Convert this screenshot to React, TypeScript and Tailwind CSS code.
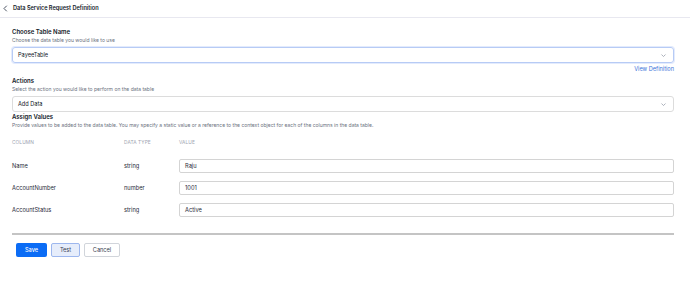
import React from "react";

const Chevron = () => (
  <svg width="7" height="7" viewBox="0 0 10 10" fill="none" stroke="#9ca3af" strokeWidth="1.2" strokeLinecap="round" strokeLinejoin="round">
    <path d="M2.5 4l2.5 2.5L7.5 4" />
  </svg>
);

const rows = [
  { name: "Name", type: "string", value: "Raju" },
  { name: "AccountNumber", type: "number", value: "1001" },
  { name: "AccountStatus", type: "string", value: "Active" },
];

export default function App() {
  return (
    <div className="w-[690px] h-[281px] bg-white text-[#1f2937]" style={{ fontFamily: "Inter, 'Noto Sans', sans-serif" }}>
      <div className="h-[18px] border-b border-[#e8e8f0] flex items-center">
        <svg className="ml-[3px]" width="5" height="7" viewBox="0 0 5 7" fill="none" stroke="#374151" strokeWidth="0.9" strokeLinecap="round" strokeLinejoin="round">
          <path d="M3.5 1L1 3.5 3.5 6" />
        </svg>
        <span className="ml-[5px] text-[5.6px] font-semibold text-[#111827]">Data Service Request Definition</span>
      </div>
      <div className="pl-[12px] pr-[16px]">
        <div className="pt-[9px] text-[6px] font-semibold leading-[9px] text-[#111827]">Choose Table Name</div>
        <div className="text-[5px] leading-[8px] text-[#6b7280]">Choose the data table you would like to use</div>
        <div className="mt-[3px] h-[16px] rounded-[3px] border border-[#b7cbf5] shadow-[0_0_0_1px_#e3ebfd] flex items-center justify-between pl-[5px] pr-[6px]">
          <span className="text-[5.6px] text-[#111827]">PayeeTable</span>
          <Chevron />
        </div>
        <div className="flex justify-end mt-[2px]">
          <span className="text-[5.6px] leading-[9px] text-[#3b74d9]">View Definition</span>
        </div>
        <div className="mt-[2px] text-[6px] font-semibold leading-[9px] text-[#111827]">Actions</div>
        <div className="text-[5px] leading-[8px] text-[#6b7280]">Select the action you would like to perform on the data table</div>
        <div className="mt-[3px] h-[16px] rounded-[3px] border border-[#dcdcdc] flex items-center justify-between pl-[5px] pr-[6px]">
          <span className="text-[5.6px] text-[#111827]">Add Data</span>
          <Chevron />
        </div>
        <div className="text-[6px] font-semibold leading-[9px] text-[#111827]">Assign Values</div>
        <div className="text-[5px] leading-[8px] text-[#6b7280]">Provide values to be added to the data table. You may specify a static value or a reference to the context object for each of the columns in the data table.</div>
        <div className="mt-[10px] flex items-center h-[8px] text-[4.8px] text-[#9ca3af] tracking-[0.1px]">
          <div className="w-[112px]">COLUMN</div>
          <div className="w-[55px]">DATA TYPE</div>
          <div>VALUE</div>
        </div>
        <div className="mt-[12px] flex flex-col gap-[8px]">
          {rows.map((r) => (
            <div key={r.name} className="flex items-center h-[14px] text-[5.7px] text-[#1f2937]">
              <div className="w-[112px]">{r.name}</div>
              <div className="w-[55px]">{r.type}</div>
              <div className="flex-1 h-[14px] rounded-[2px] border border-[#d4d4d4] flex items-center pl-[5px]">{r.value}</div>
            </div>
          ))}
        </div>
        <div className="mt-[16px] h-[2px] bg-[#c4c4c4]" />
        <div className="mt-[8px] pl-[4px] flex gap-[4px] text-[5.6px]">
          <button className="w-[31px] h-[14px] rounded-[2px] bg-[#0b6cf5] text-white font-medium">Save</button>
          <button className="w-[29px] h-[14px] rounded-[2px] bg-[#e6edfb] border border-[#9db7ee] text-[#374151]">Test</button>
          <button className="w-[36px] h-[14px] rounded-[2px] bg-white border border-[#d1d5db] text-[#374151]">Cancel</button>
        </div>
      </div>
    </div>
  );
}
